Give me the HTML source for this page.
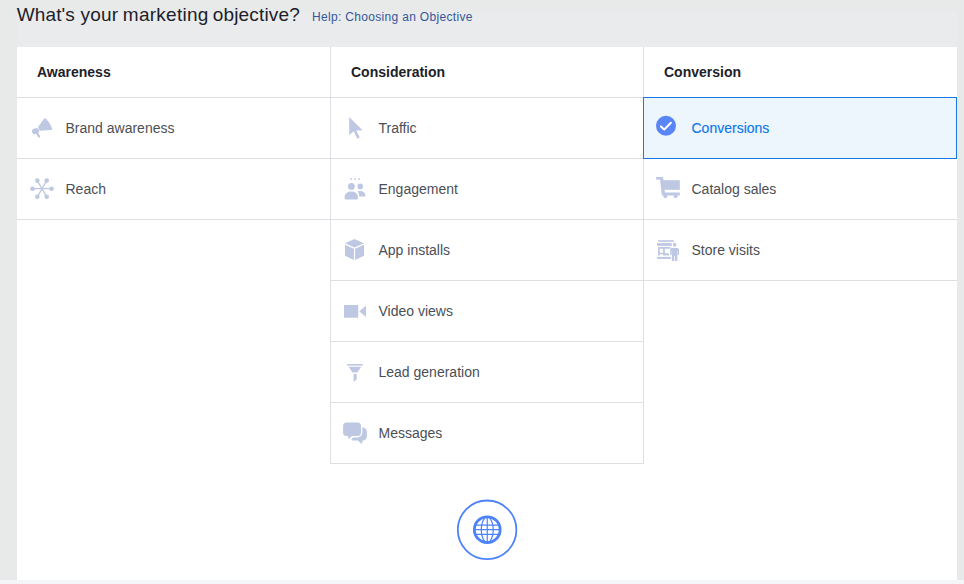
<!DOCTYPE html>
<html lang="en">
<head>
<meta charset="utf-8">
<title>What's your marketing objective?</title>
<style>
html,body{margin:0;padding:0;}
body{width:964px;height:584px;overflow:hidden;background:#e8eaea;font-family:"Liberation Sans",Helvetica,Arial,sans-serif;position:relative;color:#1d2129;}
.strip{position:absolute;left:0;top:580px;width:964px;height:4px;background:#f5f6f7;}
.band{position:absolute;left:17px;top:12px;width:940px;height:35px;background:#e9ebec;}
.title{position:absolute;left:0;top:4px;width:310px;height:21px;font-size:19px;line-height:21px;color:#1d2129;white-space:nowrap;}
.title span{position:absolute;top:0;}
.help{position:absolute;left:312px;top:10px;font-size:12px;line-height:15px;color:#365899;white-space:nowrap;text-decoration:none;letter-spacing:0.32px;}
.card{position:absolute;left:17px;top:47px;width:940px;height:533px;background:#fff;}
.col{position:absolute;top:0;}
.c1{left:0;width:313px;}
.c2{left:313px;width:313px;}
.c3{left:626px;width:314px;}
.hd{height:50px;border-bottom:1px solid #dddfe2;box-sizing:border-box;height:51px;font-weight:bold;font-size:14px;line-height:51px;padding-left:20px;color:#1d2129;}
.c2 .hd,.c3 .hd{padding-left:21px;}
.c2{border-left:1px solid #dddfe2;box-sizing:border-box;}
.c3{border-left:1px solid #dddfe2;box-sizing:border-box;height:417px;}
.c2 .hd,.c3 .hd{padding-left:20px;}
.row{height:61px;box-sizing:border-box;border-bottom:1px solid #dddfe2;font-size:14px;line-height:60px;padding-left:48.5px;color:#4b4f56;position:relative;white-space:nowrap;}
.c2 .row,.c3 .row{padding-left:47.5px;}
.c2 .row:last-child{border-right:0;}
.row.sel{background:#edf6fd;border:1px solid #1679e8;color:#0e76ea;margin-left:-1px;width:314px;line-height:60px;padding-left:47.5px;margin-top:-1px;height:62px;-webkit-text-stroke:0.15px currentColor;}
.row.sel span{position:relative;top:0px;}
svg.ic{position:absolute;left:0;top:0;overflow:visible;}
.globe{position:absolute;left:0;top:0;}
</style>
</head>
<body>
<div class="strip"></div>
<div class="band"></div>
<div class="title"><span style="left:16.8px;letter-spacing:0.12px">What's</span> <span style="left:80.500px;letter-spacing:0.2px">your</span> <span style="left:122.800px;letter-spacing:0.27px">marketing</span> <span style="left:212.650px;letter-spacing:0.18px">objective?</span></div>
<a class="help">Help: Choosing an Objective</a>
<div class="card">
  <div class="col c1">
    <div class="hd">Awareness</div>
    <div class="row"><span>Brand awareness</span></div>
    <div class="row"><span>Reach</span></div>
  </div>
  <div class="col c2">
    <div class="hd">Consideration</div>
    <div class="row"><span>Traffic</span></div>
    <div class="row"><span>Engagement</span></div>
    <div class="row"><span>App installs</span></div>
    <div class="row"><span>Video views</span></div>
    <div class="row"><span>Lead generation</span></div>
    <div class="row"><span>Messages</span></div>
  </div>
  <div class="col c3">
    <div class="hd">Conversion</div>
    <div class="row sel"><span>Conversions</span></div>
    <div class="row"><span>Catalog sales</span></div>
    <div class="row"><span>Store visits</span></div>
  </div>
</div>
<svg class="globe" width="964" height="584" viewBox="0 0 964 584">
<g fill="#bec8e3" stroke="none">
<!-- megaphone -->
<path d="M44.3 118.6 Q45 117.700 45.800 118.600 Q50.200 123 52.200 128.500 Q52.500 129.800 51.200 129.900 L39.700 130.700 L38.200 126.800 Z"/>
<rect x="31.900" y="128.400" width="7.200" height="5.300" rx="2.500" transform="rotate(-22 35.500 131)"/>
<path d="M37.300 133.600 L39.100 136.300" stroke="#bec8e3" stroke-width="2.300" stroke-linecap="round" fill="none"/>
<!-- reach -->
<g stroke="#bec8e3" stroke-width="1.3" fill="none">
<path d="M32.5 188.7 H51.5 M37.3 180.6 L46.7 196.8 M46.7 180.6 L37.3 196.8"/>
</g>
<circle cx="32.5" cy="188.7" r="2.3"/><circle cx="51.5" cy="188.7" r="2.3"/>
<circle cx="37.3" cy="180.6" r="2.3"/><circle cx="46.7" cy="180.6" r="2.3"/>
<circle cx="37.3" cy="196.8" r="2.3"/><circle cx="46.7" cy="196.8" r="2.3"/>
<!-- traffic cursor -->
<path d="M349.2 117 L349.2 135 L353.7 131.3 L357.2 138.8 L359.8 137.5 L356.3 130.4 L362.6 130.3 Z"/>
<!-- engagement -->
<rect x="350.3" y="178.3" width="1.6" height="1.6"/><rect x="354.3" y="178.3" width="1.6" height="1.6"/><rect x="358.2" y="178.3" width="1.6" height="1.6"/>
<circle cx="351.4" cy="186.4" r="3.4"/>
<circle cx="360.2" cy="186.4" r="2.8"/>
<path d="M344.600 198.200 V197 C344.600 193.500 347.500 191.500 351.300 191.500 C355 191.500 357.900 193.500 357.900 197 V198.200 Q357.900 199.400 356.700 199.400 H345.800 Q344.600 199.400 344.600 198.200 Z"/>
<path d="M357.4 191.3 C358.2 191 359.2 190.9 360.2 190.9 C363.3 190.9 365.3 192.6 365.3 195 V195.600 Q365.300 196.600 364.300 196.600 H359.200 C359.200 194.300 358.600 192.600 357.400 191.300 Z"/>
<!-- app installs box -->
<path d="M354.5 239 L345 243.3 L354.5 247.4 L364 243.3 Z"/>
<path d="M345 244.8 L353.9 248.7 V260 L345 255.8 Z"/>
<path d="M364 244.8 L355.1 248.7 V260 L364 255.8 Z"/>
<!-- video -->
<rect x="344" y="305" width="14.2" height="12.7"/>
<path d="M359.200 311.300 L366 305.800 V316.900 Z"/>
<!-- funnel -->
<rect x="347.1" y="364" width="15.7" height="1.6"/>
<path d="M348.6 366.8 H361.3 L357.3 372.5 H352.4 Z"/>
<path d="M353.6 374 H356.7 V379.6 L353.6 381.7 Z"/>
<!-- messages -->
<path d="M346.6 422.4 H357.5 A3.5 3.5 0 0 1 361 425.9 V432.5 A3.5 3.5 0 0 1 357.500 436 H352 L348.6 439.2 L348 436 H346.600 A3.500 3.500 0 0 1 343.100 432.500 V425.900 A3.500 3.500 0 0 1 346.600 422.400 Z"/>
<path d="M362.300 427.200 C365.000 427.600 366.900 429.500 366.900 432.000 V436.200 C366.900 438.600 365.200 440.300 362.800 440.500 L361.800 444.000 L357.600 440.600 H352.600 C351.800 440.600 351.300 440.100 351.400 439.500 L353.000 437.400 H357.500 C360.300 437.400 362.300 435.300 362.300 432.500 Z"/>
<!-- cart -->
<rect x="656.1" y="177" width="6.8" height="2.6"/>
<path d="M659.800 177 H663 L665 192.600 H679.800 V195.400 H661.800 Z"/>
<rect x="662.400" y="180.200" width="17.400" height="9.600"/>
<circle cx="665.3" cy="196.300" r="1.900"/><circle cx="675.600" cy="196.300" r="1.900"/>
<!-- store -->
<rect x="658.100" y="240.200" width="15.800" height="1.650"/>
<rect x="657" y="243.100" width="14.800" height="2.750"/>
<path d="M658.100 247.100 H670.500 V248.700 H664.900 V253.300 H669 V255.600 H663.100 V254.300 H659.800 V255.600 H658.100 Z M659.800 248.700 V252.700 H663.100 V248.700 Z" fill-rule="evenodd"/>
<rect x="657" y="256.900" width="13.900" height="2"/>
<ellipse cx="674.600" cy="244.700" rx="1.750" ry="2.050"/>
<path d="M671.700 248 H677.400 A1.600 1.600 0 0 1 679 249.600 V254.900 H677.300 V260.900 H674.900 V256 H674.100 V260.900 H671.900 V254.900 H670.100 V249.600 A1.600 1.600 0 0 1 671.700 248 Z"/>
<path d="M671.600 250.800 V255 M677.500 250.800 V255" stroke="#fff" stroke-width="0.500" stroke-opacity="0.700" fill="none"/>
</g>
<!-- check -->
<circle cx="666" cy="125.750" r="10" fill="#5a85f7"/>
<path d="M660.900 126.400 L664.300 129.500 L670.900 122.800" fill="none" stroke="#fff" stroke-width="2" stroke-linecap="round" stroke-linejoin="round"/>
<!-- globe button -->
<g fill="none" stroke="#4c82fa">
<circle cx="487.100" cy="529.800" r="29.300" stroke-width="1.800"/>
<circle cx="487.250" cy="529.700" r="12.900" stroke-width="2.800"/>
<g stroke-width="1.200">
<path d="M487.250 517 V542.500"/>
<ellipse cx="487.250" cy="529.700" rx="6" ry="12.700"/>
<path d="M475 529.700 H499.500 M476 525.100 H498.500 M476 534.400 H498.500"/>
</g>
</g>
</svg>
</body>
</html>
